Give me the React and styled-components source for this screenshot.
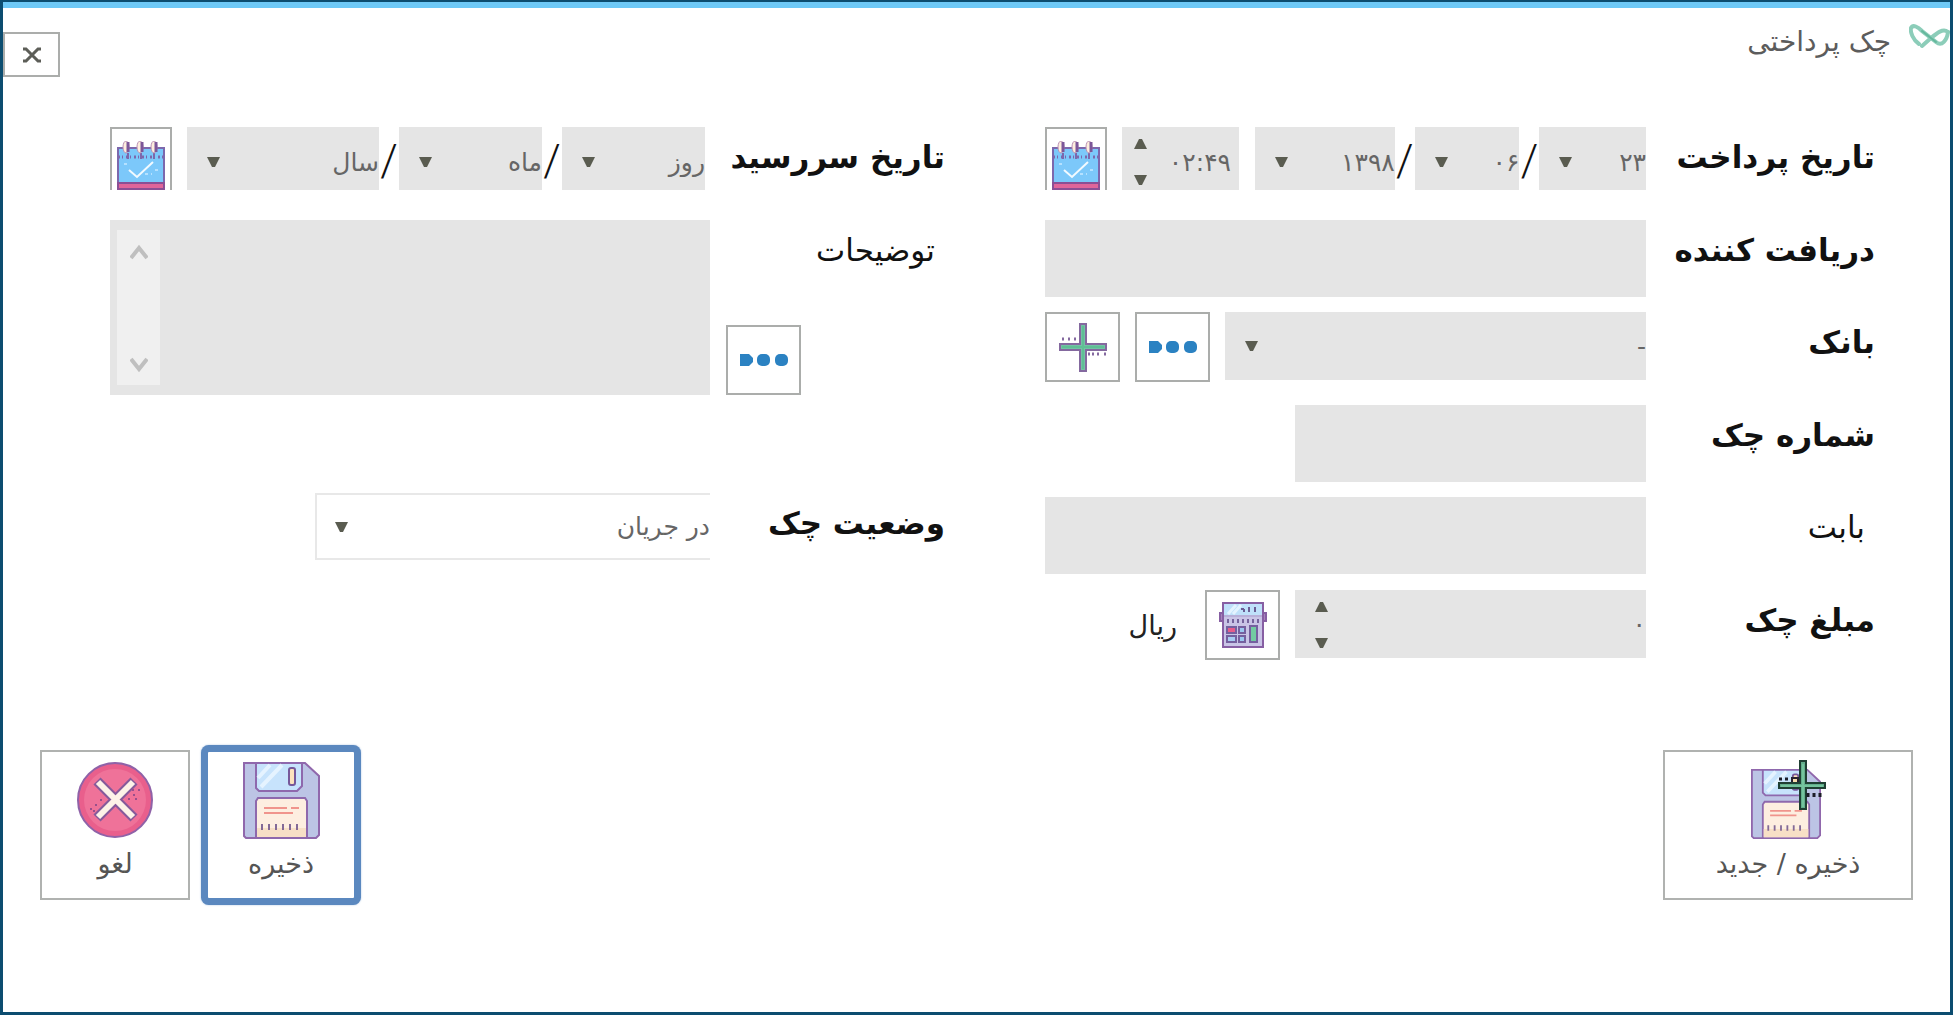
import React from "react";
import styled, { createGlobalStyle } from "styled-components";

const GlobalStyle = createGlobalStyle`
  *, *::before, *::after { box-sizing: border-box; }
  body { margin: 0; background: #fff; }
  body, button, input, select, textarea {
    font-family: "DejaVu Sans", "Noto Sans", sans-serif;
  }
`;

const Window = styled.main`
  display: flex;
  flex-direction: column;
  min-height: 100vh;
  border: 3px solid #0c4d70;
  border-top-width: 2px;
  background: #fff;
`;

const AccentBar = styled.div`
  height: 6px;
  background: #6ec9f7;
`;

const Header = styled.header`
  display: flex;
  justify-content: space-between;
  align-items: flex-start;
  height: 70px;
  padding-top: 16px;
`;

const Brand = styled.div`
  display: flex;
  align-items: flex-start;
  gap: 18px;
`;

const Title = styled.h1`
  margin: 0;
  font-size: 28px;
  line-height: 36px;
  font-weight: 400;
  color: #5c5c5c;
`;

const CloseButton = styled.button`
  display: flex;
  align-items: center;
  justify-content: center;
  width: 57px;
  height: 45px;
  margin-top: 8px;
  padding: 0;
  border: 2px solid #abadab;
  background: #fff;
`;

const Form = styled.form`
  display: flex;
  flex-direction: column;
  gap: 83px;
`;

const Columns = styled.div`
  display: flex;
  gap: 100px;
  padding: 49px 75px 0 107px;
`;

const Column = styled.div`
  flex: 1 1 ${(p) => p.$basis}px;
  min-width: 0;
  display: grid;
  grid-template-columns: ${(p) => p.$label}px minmax(0, 1fr);
  grid-template-rows: ${(p) => p.$rows};
  row-gap: 15px;
  align-items: start;
`;

const Label = styled.label`
  padding-inline-start: ${(p) => (p.$light ? 10 : 0)}px;
  font-size: 31px;
  font-weight: ${(p) => (p.$light ? 400 : 700)};
  line-height: 60px;
  color: #111;
  white-space: nowrap;
`;

const NotesLabel = styled.div`
  display: flex;
  flex-direction: column;
  justify-content: space-between;
  align-items: flex-start;
  height: 175px;
`;

const NotesAction = styled.div`
  align-self: flex-end;
  padding-inline-end: 16px;
`;

const Row = styled.div`
  display: flex;
  gap: 15px;
`;

const DateRow = styled.div`
  display: flex;
  height: 63px;
  padding-inline-start: ${(p) => p.$inset || 0}px;
  overflow: hidden;
`;

const DateParts = styled.div`
  flex: 1;
  display: flex;
  min-width: 0;
  margin-inline-end: 15px;
`;

const Slash = styled.span`
  flex: 0 0 20px;
  text-align: center;
  font-family: Roboto, "Liberation Sans", sans-serif;
  font-size: 44px;
  font-weight: 300;
  line-height: 68px;
  color: #111;
`;

const SelectBox = styled.div`
  position: relative;
  flex: ${(p) => p.$grow || 1} 1 0;
  min-width: 0;
  height: ${(p) => p.$height || 68}px;
  background: ${(p) => (p.$plain ? "#fff" : "#e5e5e5")};
  border: ${(p) => (p.$plain ? "2px solid #e8e8e8" : "0")};
  border-right: 0;

  svg {
    position: absolute;
    left: ${(p) => (p.$plain ? 18 : 20)}px;
    top: calc(50% - 5px);
    pointer-events: none;
  }
`;

const Select = styled.select`
  appearance: none;
  width: 100%;
  height: 100%;
  padding: 0;
  border: 0;
  border-radius: 0;
  background: transparent;
  color: #666;
  font-size: 25px;
  text-align: right;
`;

const TextInput = styled.input`
  display: block;
  width: ${(p) => p.$width || "100%"};
  height: 77px;
  padding: 0 8px;
  border: 0;
  background: #e5e5e5;
  color: #666;
  font-size: 25px;
`;

const NumberBox = styled.div`
  flex: 0 0 ${(p) => p.$width}px;
  display: flex;
  min-width: 0;
  height: ${(p) => p.$height}px;
  margin-inline-start: ${(p) => p.$gap || 0}px;
  padding-inline-start: ${(p) => p.$start || 0}px;
  padding-inline-end: ${(p) => p.$end}px;
  background: #e5e5e5;
`;

const NumberInput = styled.input`
  flex: 1 1 0;
  width: 0;
  min-width: 0;
  padding: 0;
  border: 0;
  background: transparent;
  color: #666;
  font-size: 25px;
  text-align: right;
`;

const Spinner = styled.div`
  flex: 0 0 13px;
  display: flex;
  flex-direction: column;
  justify-content: space-between;
  padding: 12px 0 10px;
  height: 68px;
`;

const SpinButton = styled.button`
  display: flex;
  padding: 0;
  border: 0;
  background: transparent;
`;

const IconButton = styled.button`
  flex: 0 0 ${(p) => p.$width || 75}px;
  display: flex;
  align-items: center;
  justify-content: center;
  width: ${(p) => p.$width || 75}px;
  height: 70px;
  padding: 0;
  border: 2px solid #abadab;
  background: #fff;
`;

const CalendarButton = styled(IconButton)`
  height: 76px;
`;

const Unit = styled.span`
  padding-inline-start: 13px;
  font-size: 27px;
  line-height: 72px;
  color: #222;
`;

const NotesBox = styled.div`
  display: flex;
  height: 175px;
  padding: 10px 7px;
  background: #e5e5e5;
`;

const Notes = styled.textarea`
  flex: 1;
  min-width: 0;
  padding: 0 8px;
  border: 0;
  resize: none;
  overflow: hidden;
  background: transparent;
  color: #666;
  font-size: 25px;
`;

const ScrollTrack = styled.div`
  flex: 0 0 43px;
  display: flex;
  flex-direction: column;
  justify-content: space-between;
  align-items: center;
  padding: 14px 0 12px;
  background: #f0f0f0;
`;

const StatusLabel = styled(Label)`
  margin-top: 83px;
`;

const StatusField = styled.div`
  display: flex;
  width: 395px;
  margin-top: 83px;
`;

const Footer = styled.footer`
  display: flex;
  justify-content: space-between;
  padding: 0 37px;
`;

const FooterGroup = styled.div`
  display: flex;
  gap: 16px;
`;

const ActionButton = styled.button`
  display: flex;
  flex-direction: column;
  align-items: center;
  width: ${(p) => (p.$wide ? 250 : 150)}px;
  height: 150px;
  padding: ${(p) => (p.$wide ? 8 : 10)}px 0 0;
  border: 2px solid ${(p) => (p.$primary ? "#5b88bf" : "#b0b2b0")};
  border-radius: ${(p) => (p.$primary ? 3 : 0)}px;
  box-shadow: ${(p) => (p.$primary ? "0 0 0 5px #5b88bf, 0 0 2px 5px #a9c2e0" : "none")};
  background: #fff;
  color: #555;
  font-size: 27px;
  line-height: 50px;
  white-space: nowrap;
`;

const Down = () => (
  <svg width="13" height="10" viewBox="0 0 13 10" aria-hidden="true">
    <path d="M0 0H13L8 10H5Z" fill="#5a5c50" />
  </svg>
);

const Up = () => (
  <svg width="13" height="10" viewBox="0 0 13 10" aria-hidden="true">
    <path d="M0 10H13L8 0H5Z" fill="#5a5c50" />
  </svg>
);

const Chevron = ({ up }) => (
  <svg width="18" height="16" viewBox="0 0 18 16" fill="none" stroke="#bfbfbf" strokeWidth="4" aria-hidden="true">
    <path d={up ? "M1 14L9 4L17 14" : "M1 2L9 12L17 2"} />
  </svg>
);

const CloseIcon = () => (
  <svg width="18" height="16" viewBox="0 0 18 16" fill="none" stroke="#5d5e58" strokeWidth="3" aria-hidden="true">
    <path d="M0 2H3L15 14H18M18 2H15L3 14H0" />
  </svg>
);

const Logo = () => (
  <svg width="41" height="26" viewBox="0 0 41 26" fill="none" stroke="#8ccdb9" strokeLinecap="round" aria-hidden="true">
    <path strokeWidth="4" d="M10 20C4 16 1 8 2 4C4 0 9 3 13 7L27 18C33 23 38 16 39 8" />
    <path strokeWidth="4" d="M39 8C34 4 28 9 22 14L13 22" />
    <path strokeWidth="2" stroke="#64b89d" d="M13 7L27 18" />
  </svg>
);

const CalendarIcon = () => (
  <svg width="48" height="49" viewBox="0 0 48 49" aria-hidden="true">
    <rect x="1" y="7" width="46" height="41" fill="#7cc8fa" stroke="#7c68ad" strokeWidth="2" />
    <rect x="1" y="42" width="46" height="6" fill="#e0659a" stroke="#8b4f95" strokeWidth="2" />
    <path d="M1 16H47" stroke="#7c68ad" strokeWidth="3" strokeDasharray="2 2 1 3" />
    <path d="M11 12V18M24 12V18M37 12V18" stroke="#7c68ad" strokeWidth="2" />
    {[9, 23, 37].map((x) => (
      <g key={x}>
        <ellipse cx={x} cy="6" rx="3" ry="6" fill="#fdeedd" stroke="#b98fb4" strokeWidth="1" />
        <path d={`M${x + 2} 1V11`} stroke="#7c5799" strokeWidth="3" />
      </g>
    ))}
    <path d="M12 29L20 36L36 21" fill="none" stroke="#f2faff" strokeWidth="2" />
    <path d="M7 23h3M28 33h3M38 29h3M34 33h1" stroke="#b5e1ff" strokeWidth="2" />
  </svg>
);

const PlusIcon = () => (
  <svg width="48" height="49" viewBox="0 0 48 49" aria-hidden="true">
    <path d="M21 1H27V21H47V27H27V48H21V27H1V21H21Z" fill="#72c3a4" stroke="#84699f" strokeWidth="2" />
    <path d="M24 3V46M3 24H45" stroke="#5fbf95" strokeWidth="2" />
    <path d="M3 16h2M9 16h2M15 16h2M29 31h2M33 31h2M38 31h2M45 31h2" stroke="#84699f" strokeWidth="3" />
  </svg>
);

const DotsIcon = () => (
  <svg width="48" height="12" viewBox="0 0 48 12" fill="#2b82c2" aria-hidden="true">
    <path d="M0 0H9L13 4V8L9 12H0Z" />
    <rect x="17" width="13" height="12" rx="5" />
    <rect x="35" width="13" height="12" rx="5" />
  </svg>
);

const CalculatorIcon = () => (
  <svg width="48" height="46" viewBox="0 0 48 46" aria-hidden="true">
    <path d="M1 11H47V19H1Z" fill="#a784bd" stroke="#875fa3" strokeWidth="2" />
    <rect x="4" y="1" width="40" height="44" fill="#c9c4e6" stroke="#875fa3" strokeWidth="2" />
    <rect x="5" y="2" width="38" height="11" fill="#bfe0fa" />
    <path d="M9 12L17 3M14 12L22 3" stroke="#e4f3ff" strokeWidth="3" />
    <path d="M5 14H43" stroke="#a79acb" strokeWidth="1" />
    <path d="M22 7h3M30 5v5M36 5v5M25 7v3" stroke="#6b5d94" strokeWidth="2" />
    <path d="M8 19h32" stroke="#75639c" strokeWidth="4" strokeDasharray="2 3" />
    <g stroke="#75609f" strokeWidth="2">
      <rect x="8" y="25" width="9" height="6" fill="#e65d8c" />
      <rect x="20" y="25" width="6" height="6" fill="#9cc8f0" />
      <rect x="8" y="34" width="9" height="6" fill="#a8ccf2" />
      <rect x="20" y="34" width="6" height="6" fill="#9cc8f0" />
      <rect x="31" y="24" width="7" height="16" fill="#72cba2" />
    </g>
  </svg>
);

const FloppyShape = () => (
  <>
    <path d="M1 1H62L76 14V73L73 76H3L1 74Z" fill="#bcc4e5" stroke="#9067ac" strokeWidth="2" />
    <path d="M13 1V26L16 29H54L59 24V1Z" fill="#c7e3fc" stroke="#8e68ad" strokeWidth="2" />
    <path d="M15 16L27 3M18 25L39 3" stroke="#e5f3ff" strokeWidth="4" />
    <rect x="46" y="6" width="6" height="17" rx="2" fill="#fde3bd" stroke="#76589a" strokeWidth="2" />
    <path d="M13 76V39L15 36H62L64 39V76Z" fill="#fdeee0" stroke="#8e68ad" strokeWidth="2" />
    <rect x="14" y="66" width="49" height="9" fill="#f7dfc6" />
    <path d="M21 46H44M48 46H56M21 51H50" stroke="#f0948c" strokeWidth="2" />
    <path d="M18 65h41" stroke="#836a97" strokeWidth="6" strokeDasharray="2 5" />
  </>
);

const FloppyIcon = () => (
  <svg width="77" height="77" viewBox="0 0 77 77" aria-hidden="true">
    <FloppyShape />
  </svg>
);

const FloppyPlusIcon = () => (
  <svg width="75" height="79" viewBox="0 0 75 79" aria-hidden="true">
    <svg y="9" width="70" height="70" viewBox="0 0 77 77">
      <FloppyShape />
    </svg>
    <path d="M49 1H55V23H74V28H55V49H49V28H28V23H49Z" fill="#62ad8b" stroke="#1f3f33" strokeWidth="2" />
    <path d="M52 4V47M30 26H72" stroke="#74c39d" strokeWidth="2" />
    <path d="M28 19h3M34 19h3M57 33v4M63 33v4M69 33v4" stroke="#1d1d28" strokeWidth="3" />
    <path d="M41 22V18H47V22" fill="#f7dcae" stroke="#2a2230" strokeWidth="2" />
  </svg>
);

const CancelIcon = () => (
  <svg width="77" height="77" viewBox="0 0 77 77" aria-hidden="true">
    <circle cx="38" cy="38" r="37" fill="#e95f8c" stroke="#8f62a8" strokeWidth="2" />
    <circle cx="38" cy="38" r="31" fill="#ef7299" />
    <path d="M20 19L57 56M57 19L20 56" stroke="#865a9b" strokeWidth="10" />
    <path d="M21 20L56 55M56 20L21 55" stroke="#fdf3e8" strokeWidth="6" />
    <path d="M13 47h2M18 43h2M23 38h2M16 49h2M51 37h2M56 33h2M61 28h2M58 37h2M55 28h2" stroke="#9a4f8c" strokeWidth="2" />
  </svg>
);

const Picker = ({ label, value, grow, height, plain, id }) => (
  <SelectBox $grow={grow} $height={height} $plain={plain}>
    <Select id={id} aria-label={id ? undefined : label} defaultValue={value}>
      <option value={value}>{value}</option>
    </Select>
    <Down />
  </SelectBox>
);

const Spin = () => (
  <Spinner>
    <SpinButton type="button" aria-label="افزایش"><Up /></SpinButton>
    <SpinButton type="button" aria-label="کاهش"><Down /></SpinButton>
  </Spinner>
);

export default function App() {
  return (
    <Window dir="rtl" lang="fa">
      <GlobalStyle />
      <AccentBar />
      <Header>
        <Brand>
          <Logo />
          <Title>چک پرداختی</Title>
        </Brand>
        <CloseButton type="button" aria-label="بستن"><CloseIcon /></CloseButton>
      </Header>

      <Form onSubmit={(e) => e.preventDefault()}>
        <Columns>
          <Column $basis={830} $label={229} $rows="78px 77px 78px 77px 78px 77px">
            <Label htmlFor="pay-day">تاریخ پرداخت</Label>
            <DateRow>
              <DateParts>
                <Picker id="pay-day" value="۲۳" grow={106} height={70} />
                <Slash>/</Slash>
                <Picker label="ماه" value="۰۶" grow={104} height={70} />
                <Slash>/</Slash>
                <Picker label="سال" value="۱۳۹۸" grow={139} height={70} />
                <NumberBox $width={117} $height={70} $gap={16} $start={8} $end={12}>
                  <NumberInput aria-label="ساعت" defaultValue="۰۲:۴۹" />
                  <Spin />
                </NumberBox>
              </DateParts>
              <CalendarButton type="button" $width={62} aria-label="تقویم"><CalendarIcon /></CalendarButton>
            </DateRow>

            <Label htmlFor="payee">دریافت کننده</Label>
            <TextInput id="payee" />

            <Label htmlFor="bank">بانک</Label>
            <Row>
              <Picker id="bank" value="-" />
              <IconButton type="button" aria-label="انتخاب"><DotsIcon /></IconButton>
              <IconButton type="button" aria-label="افزودن"><PlusIcon /></IconButton>
            </Row>

            <Label htmlFor="number">شماره چک</Label>
            <TextInput id="number" $width="351px" />

            <Label htmlFor="reason" $light>بابت</Label>
            <TextInput id="reason" />

            <Label htmlFor="amount">مبلغ چک</Label>
            <Row>
              <NumberBox $width={351} $height={68} $end={20}>
                <NumberInput id="amount" defaultValue="۰" />
                <Spin />
              </NumberBox>
              <IconButton type="button" aria-label="ماشین حساب"><CalculatorIcon /></IconButton>
              <Unit>ریال</Unit>
            </Row>
          </Column>

          <Column $basis={835} $label={235} $rows="78px 175px auto">
            <Label htmlFor="due-day">تاریخ سررسید</Label>
            <DateRow $inset={5}>
              <DateParts>
                <Picker id="due-day" value="روز" grow={143} height={70} />
                <Slash>/</Slash>
                <Picker label="ماه" value="ماه" grow={143} height={70} />
                <Slash>/</Slash>
                <Picker label="سال" value="سال" grow={192} height={70} />
              </DateParts>
              <CalendarButton type="button" $width={62} aria-label="تقویم"><CalendarIcon /></CalendarButton>
            </DateRow>

            <NotesLabel>
              <Label htmlFor="notes" $light>توضیحات</Label>
              <NotesAction>
                <IconButton type="button" aria-label="انتخاب توضیحات"><DotsIcon /></IconButton>
              </NotesAction>
            </NotesLabel>
            <NotesBox>
              <Notes id="notes" />
              <ScrollTrack><Chevron up /><Chevron /></ScrollTrack>
            </NotesBox>

            <StatusLabel htmlFor="status">وضعیت چک</StatusLabel>
            <StatusField>
              <Picker id="status" value="در جریان" plain height={67} />
            </StatusField>
          </Column>
        </Columns>

        <Footer>
          <ActionButton type="button" $wide><FloppyPlusIcon />ذخیره / جدید</ActionButton>
          <FooterGroup>
            <ActionButton type="submit" $primary><FloppyIcon />ذخیره</ActionButton>
            <ActionButton type="button"><CancelIcon />لغو</ActionButton>
          </FooterGroup>
        </Footer>
      </Form>
    </Window>
  );
}
